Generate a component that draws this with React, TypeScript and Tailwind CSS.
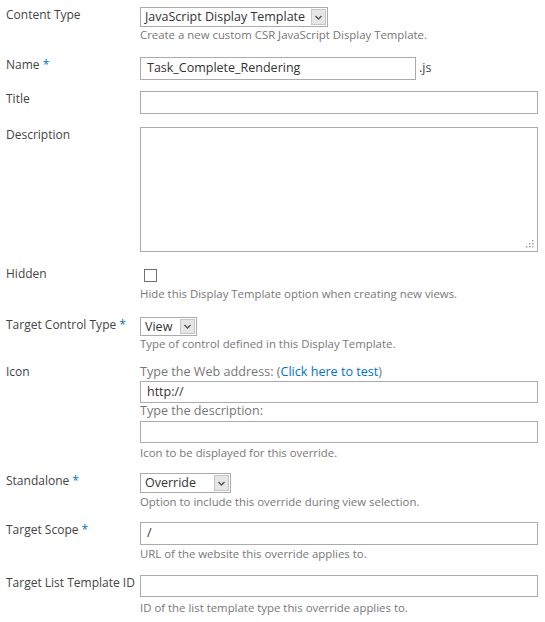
import React from 'react';

const font = "font-['Open_Sans',sans-serif]";

const Label: React.FC<{ text: string; required?: boolean }> = ({ text, required }) => (
  <div className="w-[140px] shrink-0 pl-[6px] text-[12px] leading-[16px] text-[#444] whitespace-nowrap">
    {text}
    {required && <span className="text-[#0072c6]"> *</span>}
  </div>
);

const Help: React.FC<{ children: React.ReactNode }> = ({ children }) => (
  <div className="text-[11.4px] leading-[16px] text-[#777] whitespace-nowrap">{children}</div>
);

const SubLabel: React.FC<{ children: React.ReactNode }> = ({ children }) => (
  <div className="text-[12.6px] leading-[16px] text-[#777] whitespace-nowrap">{children}</div>
);

const Select: React.FC<{ value: string; width: string }> = ({ value, width }) => (
  <div className={`flex h-full border border-[#ababab] bg-white ${width}`}>
    <div className="flex-1 pl-[4px] text-[12.5px] leading-[18px] text-[#333] whitespace-nowrap overflow-hidden">{value}</div>
    <div className="w-[17px] shrink-0 p-[1px]">
      <div className="flex h-full items-center justify-center border border-[#c6c6c6] bg-[#e6e6e6]">
        <svg width="7" height="5" viewBox="0 0 7 5">
          <path d="M0.5 1 L3.5 4 L6.5 1" fill="none" stroke="#555" strokeWidth="1.4" />
        </svg>
      </div>
    </div>
  </div>
);

const Input: React.FC<{ value?: string; className?: string }> = ({ value, className }) => (
  <div className={`border border-[#ababab] bg-white pl-[6px] text-[12.5px] text-[#333] flex items-center ${className ?? ''}`}>
    {value}
  </div>
);

export default function App() {
  return (
    <div className={`${font} w-[545px] h-[622px] bg-white pt-[7px]`}>
      {/* Content Type */}
      <div className="flex">
        <Label text="Content Type" />
        <div className="w-[398px]">
          <div className="h-[20px]">
            <Select value="JavaScript Display Template" width="w-[188px]" />
          </div>
          <Help>Create a new custom CSR JavaScript Display Template.</Help>
        </div>
      </div>

      {/* Name */}
      <div className="flex mt-[14px]">
        <Label text="Name" required />
        <div className="w-[398px] flex items-center">
          <Input value="Task_Complete_Rendering" className="w-[276px] h-[23px]" />
          <span className="ml-[3px] text-[12.5px] text-[#444]">.js</span>
        </div>
      </div>

      {/* Title */}
      <div className="flex mt-[11px]">
        <Label text="Title" />
        <Input className="w-[398px] h-[23px]" />
      </div>

      {/* Description */}
      <div className="flex mt-[13px]">
        <Label text="Description" />
        <div className="w-[398px] h-[125px] border border-[#ababab] flex items-end justify-end p-[3px]">
          <svg width="9" height="9" viewBox="0 0 9 9">
            <rect x="7" y="1" width="1.5" height="1.5" fill="#a8a8a8" />
            <rect x="4" y="4" width="1.5" height="1.5" fill="#a8a8a8" />
            <rect x="7" y="4" width="1.5" height="1.5" fill="#a8a8a8" />
            <rect x="1" y="7" width="1.5" height="1.5" fill="#a8a8a8" />
            <rect x="4" y="7" width="1.5" height="1.5" fill="#a8a8a8" />
            <rect x="7" y="7" width="1.5" height="1.5" fill="#a8a8a8" />
          </svg>
        </div>
      </div>

      {/* Hidden */}
      <div className="flex mt-[14px]">
        <Label text="Hidden" />
        <div className="w-[398px]">
          <div className="h-[20px] pt-[3px] pl-[4px]">
            <div className="w-[13px] h-[13px] border border-[#707070] bg-white" />
          </div>
          <Help>Hide this Display Template option when creating new views.</Help>
        </div>
      </div>

      {/* Target Control Type */}
      <div className="flex mt-[15px]">
        <Label text="Target Control Type" required />
        <div className="w-[398px]">
          <div className="h-[19px]">
            <Select value="View" width="w-[57px]" />
          </div>
          <Help>Type of control defined in this Display Template.</Help>
        </div>
      </div>

      {/* Icon */}
      <div className="flex mt-[12px]">
        <Label text="Icon" />
        <div className="w-[398px]">
          <SubLabel>
            Type the Web address: (<span className="text-[#0072c6]">Click here to test</span>)
          </SubLabel>
          <Input value="http://" className="w-[398px] h-[22px] mt-[1px]" />
          <SubLabel>Type the description:</SubLabel>
          <Input className="w-[398px] h-[22px] mt-[2px]" />
          <div className="mt-[2px]">
            <Help>Icon to be displayed for this override.</Help>
          </div>
        </div>
      </div>

      {/* Standalone */}
      <div className="flex mt-[12px]">
        <Label text="Standalone" required />
        <div className="w-[398px]">
          <div className="h-[20px]">
            <Select value="Override" width="w-[91px]" />
          </div>
          <div className="mt-[1px]">
            <Help>Option to include this override during view selection.</Help>
          </div>
        </div>
      </div>

      {/* Target Scope */}
      <div className="flex mt-[12px]">
        <Label text="Target Scope" required />
        <div className="w-[398px]">
          <Input value="/" className="w-[398px] h-[23px]" />
          <div className="mt-[1px]">
            <Help>URL of the website this override applies to.</Help>
          </div>
        </div>
      </div>

      {/* Target List Template ID */}
      <div className="flex mt-[13px]">
        <Label text="Target List Template ID" />
        <div className="w-[398px]">
          <Input className="w-[398px] h-[22px]" />
          <div className="mt-[3px]">
            <Help>ID of the list template type this override applies to.</Help>
          </div>
        </div>
      </div>
    </div>
  );
}
